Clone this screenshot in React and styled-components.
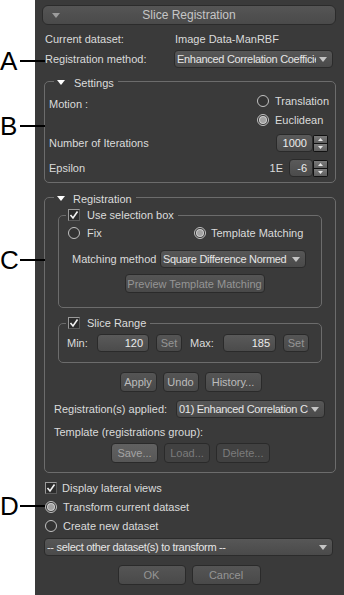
import React from "react";
import styled, { createGlobalStyle } from "styled-components";

// Slice Registration panel with A-D callouts on the left margin

const GlobalStyle = createGlobalStyle`
  html, body {
    margin: 0;
    padding: 0;
    background: #ffffff;
  }
  body {
    font-family: "Liberation Sans", Arial, sans-serif;
  }
`;

const Triangle = ({ color = "#ffffff", w = 8, h = 5 }) => (
  <svg width={w} height={h} viewBox={`0 0 ${w} ${h}`}>
    <polygon points={`0,0 ${w},0 ${w / 2},${h}`} fill={color} />
  </svg>
);

const Check = ({ checked = true }) => (
  <CheckBox>
    {checked && (
      <svg width="10" height="10" viewBox="0 0 10 10">
        <polyline points="1.5,5 4,8 8.5,1.5" fill="none" stroke="#f2f2f2" strokeWidth="1.6" />
      </svg>
    )}
  </CheckBox>
);

const Radio = ({ checked, label, gap }) => (
  <Option $gap={gap}>
    <RadioDot $checked={checked} />
    <span>{label}</span>
  </Option>
);

const Combo = ({ text, w }) => (
  <ComboBox $w={w}>
    <ComboText>{text}</ComboText>
    <Triangle color="#c4c4c4" w={8} h={5} />
  </ComboBox>
);

const Spin = ({ value, w }) => (
  <SpinWrap>
    <Edit $w={w}>{value}</Edit>
    <SpinButtons>
      <SpinHalf>
        <svg width="5" height="3" viewBox="0 0 5 3"><polygon points="0,3 5,3 2.5,0" fill="#e8e8e8" /></svg>
      </SpinHalf>
      <SpinHalf>
        <svg width="5" height="3" viewBox="0 0 5 3"><polygon points="0,0 5,0 2.5,3" fill="#e8e8e8" /></svg>
      </SpinHalf>
    </SpinButtons>
  </SpinWrap>
);

const App = () => {
  return (
    <Page>
      <GlobalStyle />
      <Gutter />
      <Panel>
        <Header>
          <HeaderIcon>
            <Triangle color="#9c9c9c" w={8} h={5} />
          </HeaderIcon>
          <span>Slice Registration</span>
          <span />
        </Header>

        <Row $mt={4} $pl={3}>
          <FieldLabel $w={130}>Current dataset:</FieldLabel>
          <span>Image Data-ManRBF</span>
        </Row>
        <Row $pl={3}>
          <FieldLabel $w={129}>Registration method:</FieldLabel>
          <Combo text="Enhanced Correlation Coefficient" />
          <RightGap />
        </Row>

        <Group $mt={5} $ml={2}>
          <Legend $ml={9}>
            <LegendInner $gap={9}>
              <Triangle />
              <span>Settings</span>
            </LegendInner>
          </Legend>
          <GroupBody $p="0 7px 4px 4px">
            <MotionRow>
              <MotionLabel>Motion :</MotionLabel>
              <RadioColumn>
                <Row $h={19} $mt={3}>
                  <Radio label="Translation" />
                </Row>
                <Row $h={19}>
                  <Radio checked label="Euclidean" />
                </Row>
              </RadioColumn>
            </MotionRow>
            <Row $mt={4} $between>
              <span>Number of Iterations</span>
              <Spin value="1000" w={37} />
            </Row>
            <Row $mt={5} $between>
              <span>Epsilon</span>
              <Row>
                <Exponent>1E</Exponent>
                <Spin value="-6" w={24} />
              </Row>
            </Row>
          </GroupBody>
        </Group>

        <Group $mt={7} $ml={2}>
          <Legend $ml={9}>
            <LegendInner $gap={8}>
              <Triangle />
              <span>Registration</span>
            </LegendInner>
          </Legend>
          <GroupBody $p="0 8px 9px 9px">
            <Group $mt={4} $ml={4} $mr={5}>
              <Legend $ml={7}>
                <LegendInner $gap={7} $pl={2}>
                  <Check />
                  <span>Use selection box</span>
                </LegendInner>
              </Legend>
              <GroupBody $p="0 0 14px 9px">
                <ChoiceGrid>
                  <Radio label="Fix" gap={7} />
                  <Radio checked label="Template Matching" gap={5} />
                </ChoiceGrid>
                <Row $mt={7} $pl={4}>
                  <FieldLabel $w={88}>Matching method</FieldLabel>
                  <Combo text="Square Difference Normed" w={146} />
                </Row>
                <Centered $mt={5}>
                  <Button $w={140} $h={19} $tone="disabled">Preview Template Matching</Button>
                </Centered>
              </GroupBody>
            </Group>

            <Group $mt={8} $ml={4} $mr={5}>
              <Legend $ml={7}>
                <LegendInner $gap={7} $pl={2}>
                  <Check />
                  <span>Slice Range</span>
                </LegendInner>
              </Legend>
              <GroupBody $p="0 0 10px 8px">
                <Row $h={18} $mt={4}>
                  <FieldLabel $w={30}>Min:</FieldLabel>
                  <Edit $w={52}>120</Edit>
                  <Button $w={26} $h={18} $ml={7} $tone="disabled">Set</Button>
                  <FieldLabel $w={33} $ml={8}>Max:</FieldLabel>
                  <Edit $w={53}>185</Edit>
                  <Button $w={26} $h={18} $ml={7} $tone="disabled">Set</Button>
                </Row>
              </GroupBody>
            </Group>

            <Centered $mt={9} $gap={6}>
              <Button $w={37}>Apply</Button>
              <Button $w={36}>Undo</Button>
              <Button $w={57}>History...</Button>
            </Centered>

            <Row $mt={7}>
              <FieldLabel $w={122}>Registration(s) applied:</FieldLabel>
              <Combo text="01) Enhanced Correlation Coefficient" w={149} />
            </Row>
            <Row $h={14} $mt={6}>
              <span>Template (registrations group):</span>
            </Row>
            <Centered $mt={4} $gap={6}>
              <Button $w={47} $tone="light">Save...</Button>
              <Button $w={46} $tone="dim">Load...</Button>
              <Button $w={54} $tone="dim">Delete...</Button>
            </Centered>
          </GroupBody>
        </Group>

        <Row $h={19} $mt={5} $pl={3}>
          <Option $gap={5}>
            <Check />
            <span>Display lateral views</span>
          </Option>
        </Row>
        <Row $h={19} $pl={3}>
          <Radio checked label="Transform current dataset" />
        </Row>
        <Row $h={19} $pl={3}>
          <Radio label="Create new dataset" />
        </Row>
        <Row $h={18} $mt={3} $pl={2}>
          <Combo text="-- select other dataset(s) to transform --" />
          <RightGap />
        </Row>
        <Centered $mt={9} $gap={6}>
          <Button $w={68} $tone="disabled">OK</Button>
          <Button $w={69} $tone="disabled">Cancel</Button>
        </Centered>
      </Panel>

      <Callout $top={49}>
        <Letter>A</Letter>
        <Leader />
      </Callout>
      <Callout $top={114}>
        <Letter>B</Letter>
        <Leader />
      </Callout>
      <Callout $top={248}>
        <Letter>C</Letter>
        <Leader />
      </Callout>
      <Callout $top={494}>
        <Letter>D</Letter>
        <Leader />
      </Callout>
    </Page>
  );
};

export default App;

// Styled components

const Page = styled.div`
  position: relative;
  display: flex;
  width: 344px;
  height: 595px;
  overflow: hidden;
  background: #ffffff;
`;

const Gutter = styled.div`
  width: 35px;
  flex-shrink: 0;
`;

const Panel = styled.div`
  width: 309px;
  min-width: 0;
  flex: none;
  box-sizing: border-box;
  display: flex;
  flex-direction: column;
  background: #3a3a3a;
  padding: 5px 8px 0 7px;
  color: #dadada;
  font-size: 11px;
  line-height: 14px;
`;

const Header = styled.div`
  height: 20px;
  box-sizing: border-box;
  display: grid;
  grid-template-columns: 1fr auto 1fr;
  align-items: center;
  border: 1px solid #2b2b2b;
  border-radius: 6px;
  background: linear-gradient(#555555, #4a4a4a);
  color: #c6c6c6;
  font-size: 12px;
`;

const HeaderIcon = styled.span`
  display: flex;
  padding-left: 9px;
`;

const Row = styled.div`
  display: flex;
  align-items: center;
  justify-content: ${(p) => (p.$between ? "space-between" : "flex-start")};
  height: ${(p) => p.$h || 20}px;
  margin-top: ${(p) => p.$mt || 0}px;
  padding-left: ${(p) => p.$pl || 0}px;
  white-space: nowrap;
  min-width: 0;
`;

const FieldLabel = styled.span`
  width: ${(p) => p.$w}px;
  margin-left: ${(p) => p.$ml || 0}px;
  flex-shrink: 0;
`;

const RightGap = styled.span`
  width: 3px;
  flex-shrink: 0;
`;

const ComboBox = styled.div`
  height: 18px;
  box-sizing: border-box;
  width: ${(p) => (p.$w ? `${p.$w}px` : "0")};
  flex: ${(p) => (p.$w ? "none" : "1 1 0")};
  min-width: 0;
  display: flex;
  align-items: center;
  padding: 0 5px 0 2px;
  border: 1px solid #2b2b2b;
  border-radius: 4px;
  background: linear-gradient(#575757, #4a4a4a);
  color: #e6e6e6;
  overflow: hidden;

  svg {
    flex-shrink: 0;
    margin-left: 3px;
  }
`;

const ComboText = styled.span`
  flex: 1 1 0;
  min-width: 0;
  overflow: hidden;
  white-space: nowrap;
  letter-spacing: -0.3px;
`;

const Group = styled.fieldset`
  margin: ${(p) => p.$mt || 0}px ${(p) => p.$mr || 0}px 0 ${(p) => p.$ml || 0}px;
  padding: 0;
  min-width: 0;
  border: 1px solid #6c6c6c;
  border-radius: 5px;
`;

const Legend = styled.legend`
  margin-left: ${(p) => p.$ml}px;
  padding: 0;
  height: 14px;
  line-height: 14px;
`;

const LegendInner = styled.span`
  display: inline-flex;
  align-items: center;
  gap: ${(p) => p.$gap}px;
  height: 14px;
  padding: 0 4px 0 ${(p) => (p.$pl === undefined ? 3 : p.$pl)}px;
  color: #dcdcdc;
`;

const GroupBody = styled.div`
  display: flex;
  flex-direction: column;
  padding: ${(p) => p.$p};
`;

const MotionRow = styled.div`
  display: flex;
  justify-content: space-between;
`;

const MotionLabel = styled.span`
  margin-top: 9px;
`;

const RadioColumn = styled.div`
  display: flex;
  flex-direction: column;
  width: 71px;
`;

const Exponent = styled.span`
  margin-right: 6px;
`;

const Option = styled.label`
  display: inline-flex;
  align-items: center;
  gap: ${(p) => (p.$gap === undefined ? 6 : p.$gap)}px;
  white-space: nowrap;
`;

const RadioDot = styled.span`
  position: relative;
  width: 12px;
  height: 12px;
  box-sizing: border-box;
  border-radius: 50%;
  border: 1px solid #c2c2c2;
  background: #333333;
  flex-shrink: 0;

  &::after {
    content: "";
    display: ${(p) => (p.$checked ? "block" : "none")};
    position: absolute;
    left: 2px;
    top: 2px;
    width: 6px;
    height: 6px;
    border-radius: 50%;
    background: #a2a2a2;
    box-shadow: 0 0 0 1px #d0d0d0;
  }
`;

const CheckBox = styled.span`
  width: 12px;
  height: 12px;
  box-sizing: border-box;
  display: flex;
  align-items: center;
  justify-content: center;
  flex-shrink: 0;
  border: 1px solid #9a9a9a;
  border-right-color: #5a5a5a;
  border-bottom-color: #5a5a5a;
  background: #2c2c2c;
`;

const ChoiceGrid = styled.div`
  display: grid;
  grid-template-columns: 126px auto;
  align-items: center;
  height: 19px;
  margin-top: 1px;
`;

const Centered = styled.div`
  display: flex;
  justify-content: center;
  gap: ${(p) => p.$gap || 0}px;
  margin-top: ${(p) => p.$mt || 0}px;
`;

const toneColor = {
  normal: "#bcbcbc",
  disabled: "#959595",
  light: "#a4a4a4",
  dim: "#7c7c7c",
};

const Button = styled.button`
  width: ${(p) => p.$w}px;
  height: ${(p) => p.$h || 20}px;
  margin-left: ${(p) => p.$ml || 0}px;
  box-sizing: border-box;
  padding: 0;
  flex-shrink: 0;
  border: 1px solid #2a2a2a;
  border-radius: 4px;
  background: ${(p) =>
    p.$tone === "dim"
      ? "#414141"
      : p.$tone === "light"
      ? "linear-gradient(#616161, #575757)"
      : "linear-gradient(#555555, #494949)"};
  color: ${(p) => toneColor[p.$tone || "normal"]};
  font-family: inherit;
  font-size: 11px;
  line-height: 14px;
  white-space: nowrap;
`;

const Edit = styled.div`
  width: ${(p) => p.$w}px;
  height: 18px;
  box-sizing: border-box;
  flex-shrink: 0;
  display: flex;
  align-items: center;
  justify-content: flex-end;
  padding-right: 5px;
  border: 1px solid #2a2a2a;
  border-radius: 4px;
  background: linear-gradient(#5a5a5a, #4b4b4b);
  color: #ececec;
`;

const SpinWrap = styled.div`
  display: flex;
  align-items: center;
`;

const SpinButtons = styled.div`
  display: flex;
  flex-direction: column;
  gap: 1px;
  width: 15px;
  height: 17px;
  box-sizing: border-box;
  padding: 1px;
  background: #111111;
  border-radius: 2px;
`;

const SpinHalf = styled.span`
  flex: 1;
  display: flex;
  align-items: center;
  justify-content: center;
  background: linear-gradient(#7a7a7a, #5e5e5e);
`;

const Callout = styled.div`
  position: absolute;
  left: 0;
  top: ${(p) => p.$top}px;
  width: 45px;
  height: 24px;
  display: flex;
  align-items: center;
`;

const Letter = styled.span`
  width: 20px;
  font-family: "Liberation Sans", Arial, sans-serif;
  font-size: 26px;
  line-height: 24px;
  color: #000000;
`;

const Leader = styled.span`
  flex: 1;
  height: 2px;
  background: #000000;
`;
